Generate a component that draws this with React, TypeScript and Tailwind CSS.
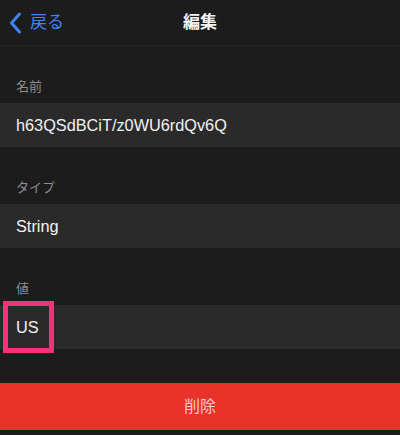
import React from "react";

const jp = { fontFamily: '"Liberation Sans", "Noto Sans CJK JP", sans-serif' };

function Label({ text }: { text: string }) {
  return (
    <div className="h-[57px] flex items-end pl-4 pb-[8px] text-[13px] leading-[16px] text-[#8d8d92]">
      {text}
    </div>
  );
}

function Row({ children }: { children: React.ReactNode }) {
  return (
    <div className="h-[44px] bg-[#2a2a2b] flex items-center pl-4 text-[16.3px] text-[#f2f2f2]">
      {children}
    </div>
  );
}

export default function App() {
  return (
    <div className="w-[400px] h-[435px] bg-[#1c1c1d] overflow-hidden" style={jp}>
      <div className="h-[46px] flex items-center relative border-b border-[#262627]">
        <div className="flex items-center pl-[9px] text-[17px]">
          <svg width="13" height="22" viewBox="0 0 13 22" className="mr-[8px]">
            <path d="M10.5 2 L2.5 11 L10.5 20" fill="none" stroke="#3d84f5" strokeWidth="3" strokeLinecap="round" strokeLinejoin="round" />
          </svg>
          <span className="text-[#3d84f5]">戻る</span>
        </div>
        <div className="absolute left-0 right-0 top-0 h-[46px] flex items-center justify-center text-[17px] font-bold text-[#f5f5f5] pointer-events-none">
          編集
        </div>
      </div>
      <Label text="名前" />
      <Row>h63QSdBCiT/z0WU6rdQv6Q</Row>
      <Label text="タイプ" />
      <Row>String</Row>
      <Label text="値" />
      <div className="relative">
        <Row>US</Row>
        <div className="absolute left-[3px] top-[-4px] w-[51px] h-[52px] border-[5px] border-[#f5317a]" />
      </div>
      <div className="h-[34px]" />
      <div className="h-[47px] bg-[#e8322a] flex items-center justify-center text-[16px] text-[#f6c9c4]">
        削除
      </div>
    </div>
  );
}
